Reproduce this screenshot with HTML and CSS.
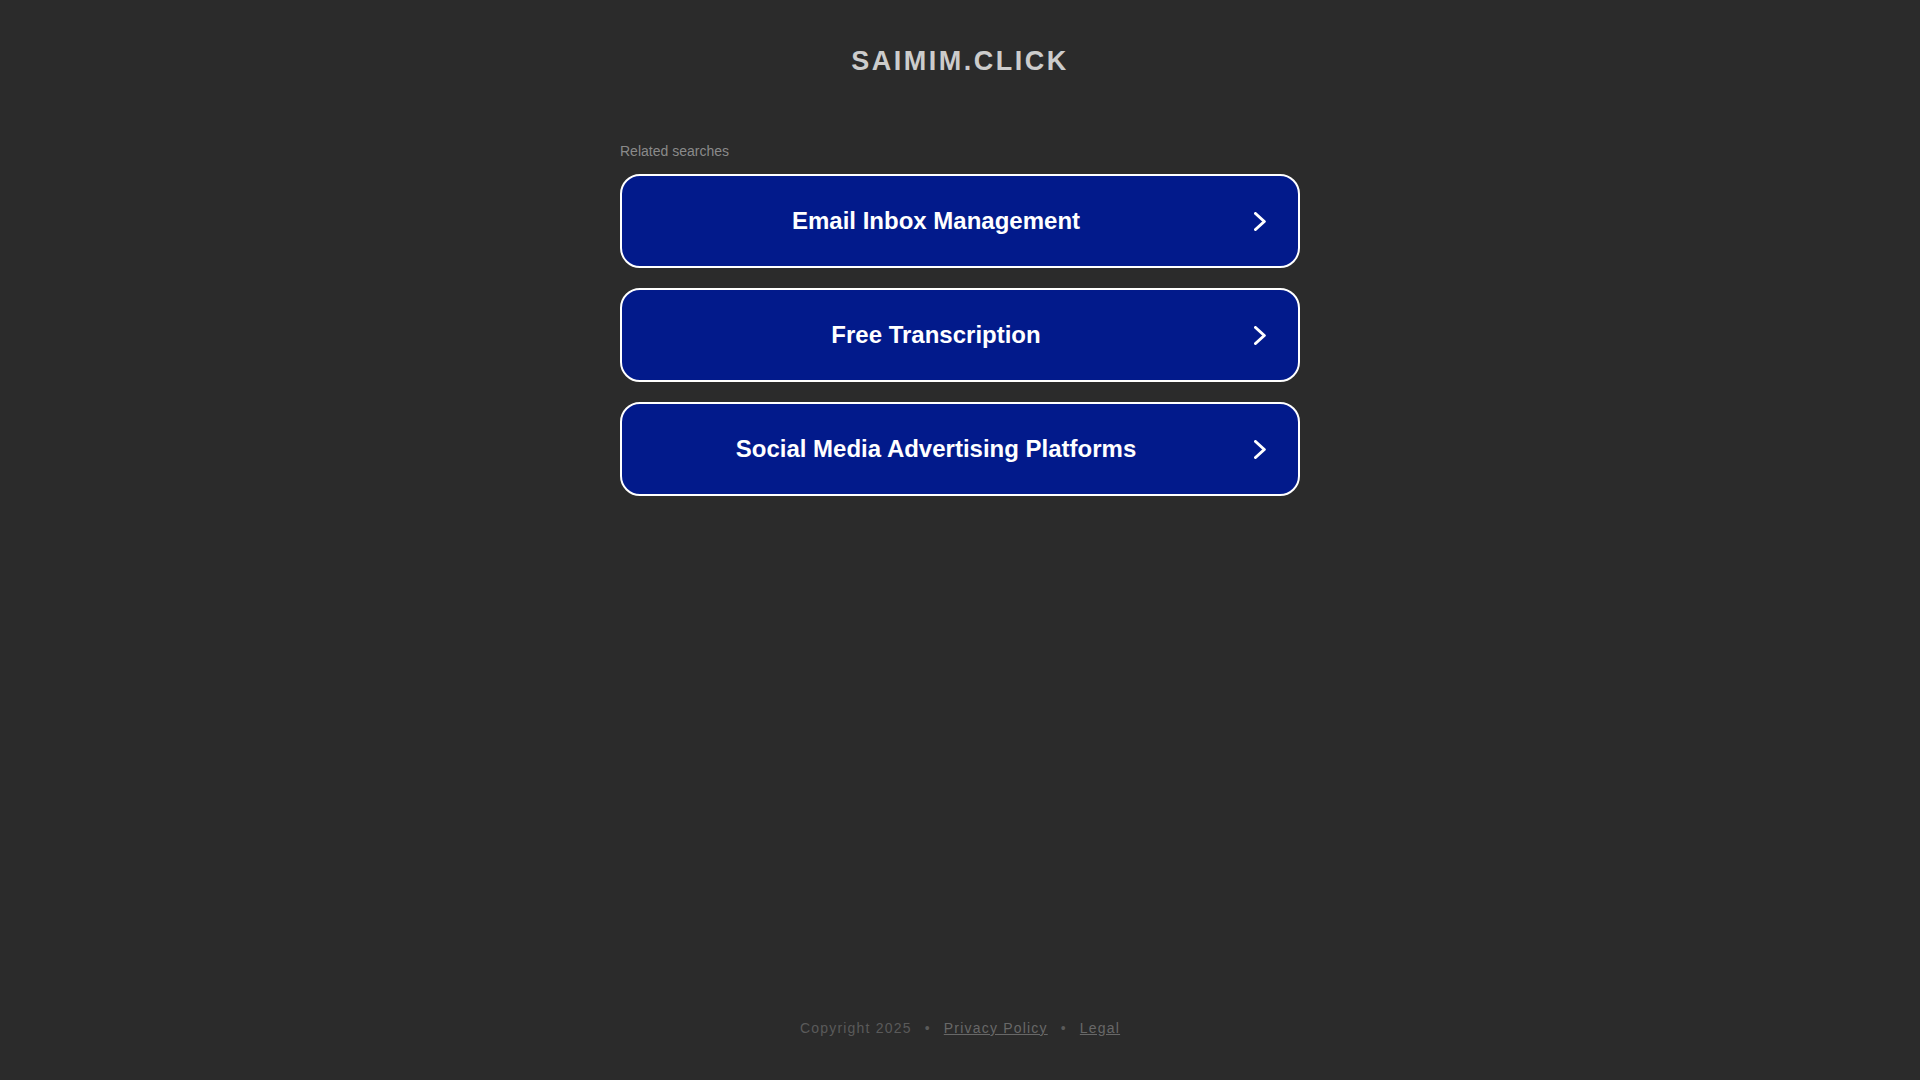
FILE: index.html
```html
<!DOCTYPE html>
<html lang="en">
<head>
<meta charset="utf-8">
<title>saimim.click</title>
<link rel="stylesheet" href="styles.css">
</head>
<body>
<div class="page">
  <header class="header">
    <h1 class="domain">SAIMIM.CLICK</h1>
  </header>
  <main class="content">
    <p class="related-label">Related searches</p>
    <ul class="links">
      <li><a class="link-box" href="#"><span class="link-text">Email Inbox Management</span><svg class="chevron" width="12" height="19" viewBox="0 0 12 19"><polyline points="1.5,1.5 10.3,9.5 1.5,17.5" fill="none" stroke="#fff" stroke-width="3" stroke-linecap="round" stroke-linejoin="round"/></svg></a></li>
      <li><a class="link-box" href="#"><span class="link-text">Free Transcription</span><svg class="chevron" width="12" height="19" viewBox="0 0 12 19"><polyline points="1.5,1.5 10.3,9.5 1.5,17.5" fill="none" stroke="#fff" stroke-width="3" stroke-linecap="round" stroke-linejoin="round"/></svg></a></li>
      <li><a class="link-box" href="#"><span class="link-text">Social Media Advertising Platforms</span><svg class="chevron" width="12" height="19" viewBox="0 0 12 19"><polyline points="1.5,1.5 10.3,9.5 1.5,17.5" fill="none" stroke="#fff" stroke-width="3" stroke-linecap="round" stroke-linejoin="round"/></svg></a></li>
    </ul>
  </main>
  <footer class="footer">
    <span class="copyright">Copyright 2025</span>
    <span class="sep">•</span>
    <a class="footer-link" href="#">Privacy Policy</a>
    <span class="sep">•</span>
    <a class="footer-link" href="#">Legal</a>
  </footer>
</div>
</body>
</html>
```

FILE: styles.css
```css
html, body {
  margin: 0;
  padding: 0;
}

body {
  background: #2b2b2b;
  font-family: "Liberation Sans", Arial, sans-serif;
}

.page {
  min-height: 100vh;
  display: flex;
  flex-direction: column;
  align-items: center;
}

.header {
  padding-top: 46px;
}

.domain {
  margin: 0;
  font-size: 27px;
  line-height: 31px;
  font-weight: bold;
  letter-spacing: 2.5px;
  color: #cccccc;
  text-align: center;
}

.content {
  width: 680px;
  margin-top: 66px;
}

.related-label {
  margin: 0 0 15px 0;
  font-size: 14px;
  line-height: 16px;
  color: #8a8a8a;
}

.links {
  list-style: none;
  margin: 0;
  padding: 0;
  display: flex;
  flex-direction: column;
  gap: 20px;
}

.link-box {
  box-sizing: border-box;
  height: 94px;
  display: flex;
  align-items: center;
  background: #021a8b;
  border: 2px solid #ffffff;
  border-radius: 20px;
  padding: 0 32px 0 0;
  text-decoration: none;
  color: #ffffff;
}

.link-text {
  flex: 1;
  text-align: center;
  font-size: 24px;
  font-weight: bold;
  line-height: 28px;
}

.chevron {
  display: block;
  margin-left: 4px;
  flex: none;
}

.footer {
  margin-top: auto;
  padding-bottom: 44px;
  display: flex;
  align-items: center;
  font-size: 14px;
  line-height: 16px;
  letter-spacing: 1.2px;
  color: #5a5a5a;
}

.sep {
  margin: 0 13px;
}

.footer-link {
  color: #686868;
  text-decoration: underline;
}
```
